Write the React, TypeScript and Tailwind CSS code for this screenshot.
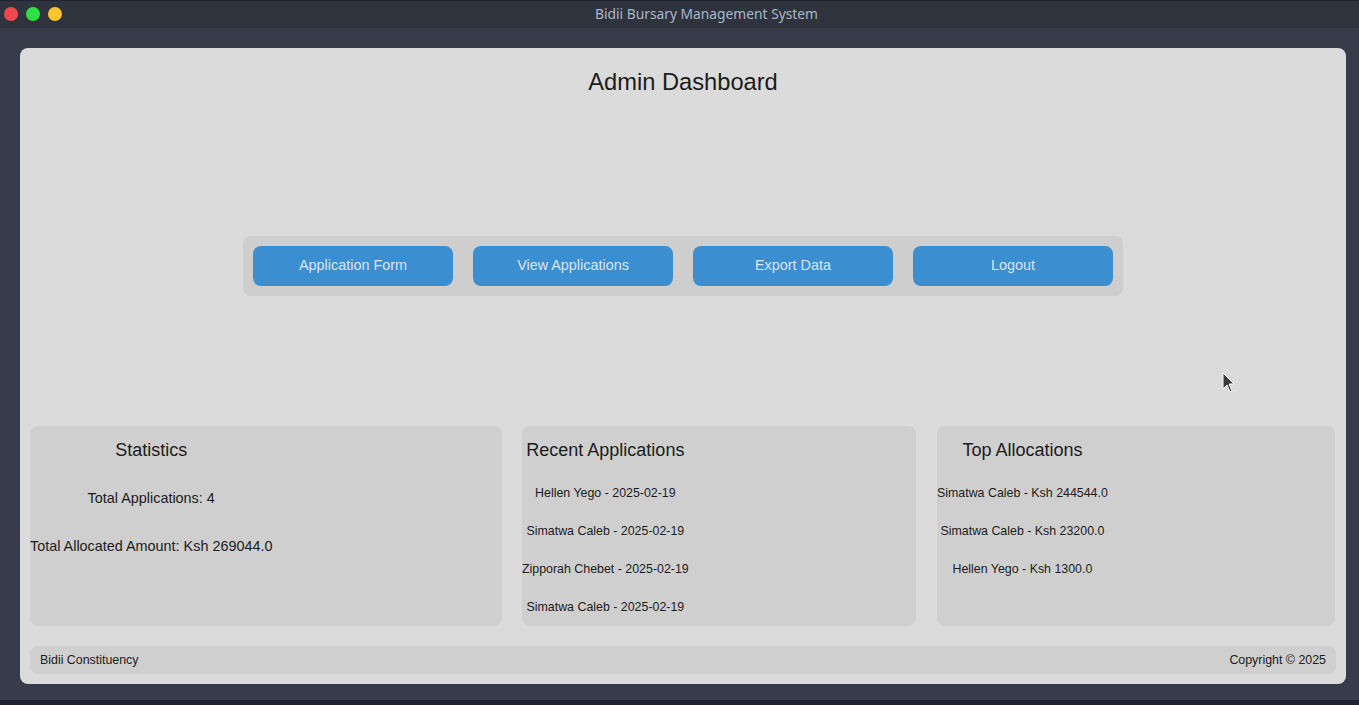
import React from "react";

const buttons = ["Application Form", "View Applications", "Export Data", "Logout"];

const recent = [
  "Hellen Yego - 2025-02-19",
  "Simatwa Caleb - 2025-02-19",
  "Zipporah Chebet - 2025-02-19",
  "Simatwa Caleb - 2025-02-19",
];

const top = [
  "Simatwa Caleb - Ksh 244544.0",
  "Simatwa Caleb - Ksh 23200.0",
  "Hellen Yego - Ksh 1300.0",
];

export default function App() {
  return (
    <div className="relative flex h-[705px] w-[1359px] flex-col overflow-hidden bg-[#383b4a] font-['Liberation_Sans',Arial,sans-serif] text-[#1c1c1c]">
      {/* title bar */}
      <div className="relative flex h-[28px] items-center justify-center border-t border-[#1e2430] bg-[#2f333d] pl-[54px]">
        <div className="absolute left-[4px] top-[6px] flex gap-[8px]">
          <span className="h-[14px] w-[14px] rounded-full bg-[#f2474f]" />
          <span className="h-[14px] w-[14px] rounded-full bg-[#2fe045]" />
          <span className="h-[14px] w-[14px] rounded-full bg-[#fdc42e]" />
        </div>
        <span className="font-['Noto_Sans',sans-serif] text-[13.8px] text-[#a9b7c9]">
          Bidii Bursary Management System
        </span>
      </div>

      {/* window body */}
      <div className="flex-1 px-[20px] pt-[20px]">
        <div className="flex h-[636px] w-[1326px] flex-col rounded-[8px] bg-[#dbdbdb] px-[10px] pb-[10px]">
          <h1 className="mt-[18px] text-center text-[23.7px] leading-[32px]">Admin Dashboard</h1>

          <div className="mx-auto mt-[138px] flex gap-[20px] rounded-[8px] bg-[#cecece] p-[10px]">
            {buttons.map((b) => (
              <button
                key={b}
                className="h-[40px] w-[200px] rounded-[8px] bg-[#3b8ed0] pb-[1px] text-[14.4px] text-[#dce4ee]"
              >
                {b}
              </button>
            ))}
          </div>

          <div className="mt-[130px] flex">
            <div className="h-[200px] w-[472px] rounded-[8px] bg-[#cfcfcf]">
              <div className="flex w-fit flex-col items-center gap-6 pt-3">
                <div className="text-[18px] leading-6">Statistics</div>
                <div className="text-[14.4px] leading-6">Total Applications: 4</div>
                <div className="text-[14.4px] leading-6">Total Allocated Amount: Ksh 269044.0</div>
              </div>
            </div>

            <div className="ml-5 h-[200px] w-[394px] rounded-[8px] bg-[#cfcfcf]">
              <div className="flex w-fit flex-col items-center pt-3">
                <div className="text-[18px] leading-6">Recent Applications</div>
                <div className="mt-[12px] flex flex-col items-center">
                  {recent.map((r, i) => (
                    <div key={i} className="text-[12.4px] leading-[38px]">{r}</div>
                  ))}
                </div>
              </div>
            </div>

            <div className="ml-[21px] h-[200px] w-[398px] rounded-[8px] bg-[#cfcfcf]">
              <div className="flex w-fit flex-col items-center pt-3">
                <div className="text-[18px] leading-6">Top Allocations</div>
                <div className="mt-[12px] flex flex-col items-center">
                  {top.map((t, i) => (
                    <div key={i} className="text-[12.4px] leading-[38px]">{t}</div>
                  ))}
                </div>
              </div>
            </div>
          </div>

          <div className="mt-[20px] flex h-[28px] items-center justify-between rounded-[8px] bg-[#cfcfcf] px-[10px] text-[12.4px]">
            <span>Bidii Constituency</span>
            <span>Copyright © 2025</span>
          </div>
        </div>
      </div>
      <div className="h-[5px] bg-[#1f2430]" />

      {/* mouse pointer */}
      <svg className="absolute left-[1222px] top-[372px]" width="14" height="22" viewBox="0 0 14 22">
        <path d="M1 1 L1 17 L5 13 L8 20 L10 19 L7 12 L12 12 Z" fill="#3a3a3a" stroke="#ffffff" strokeWidth="1" />
      </svg>
    </div>
  );
}
